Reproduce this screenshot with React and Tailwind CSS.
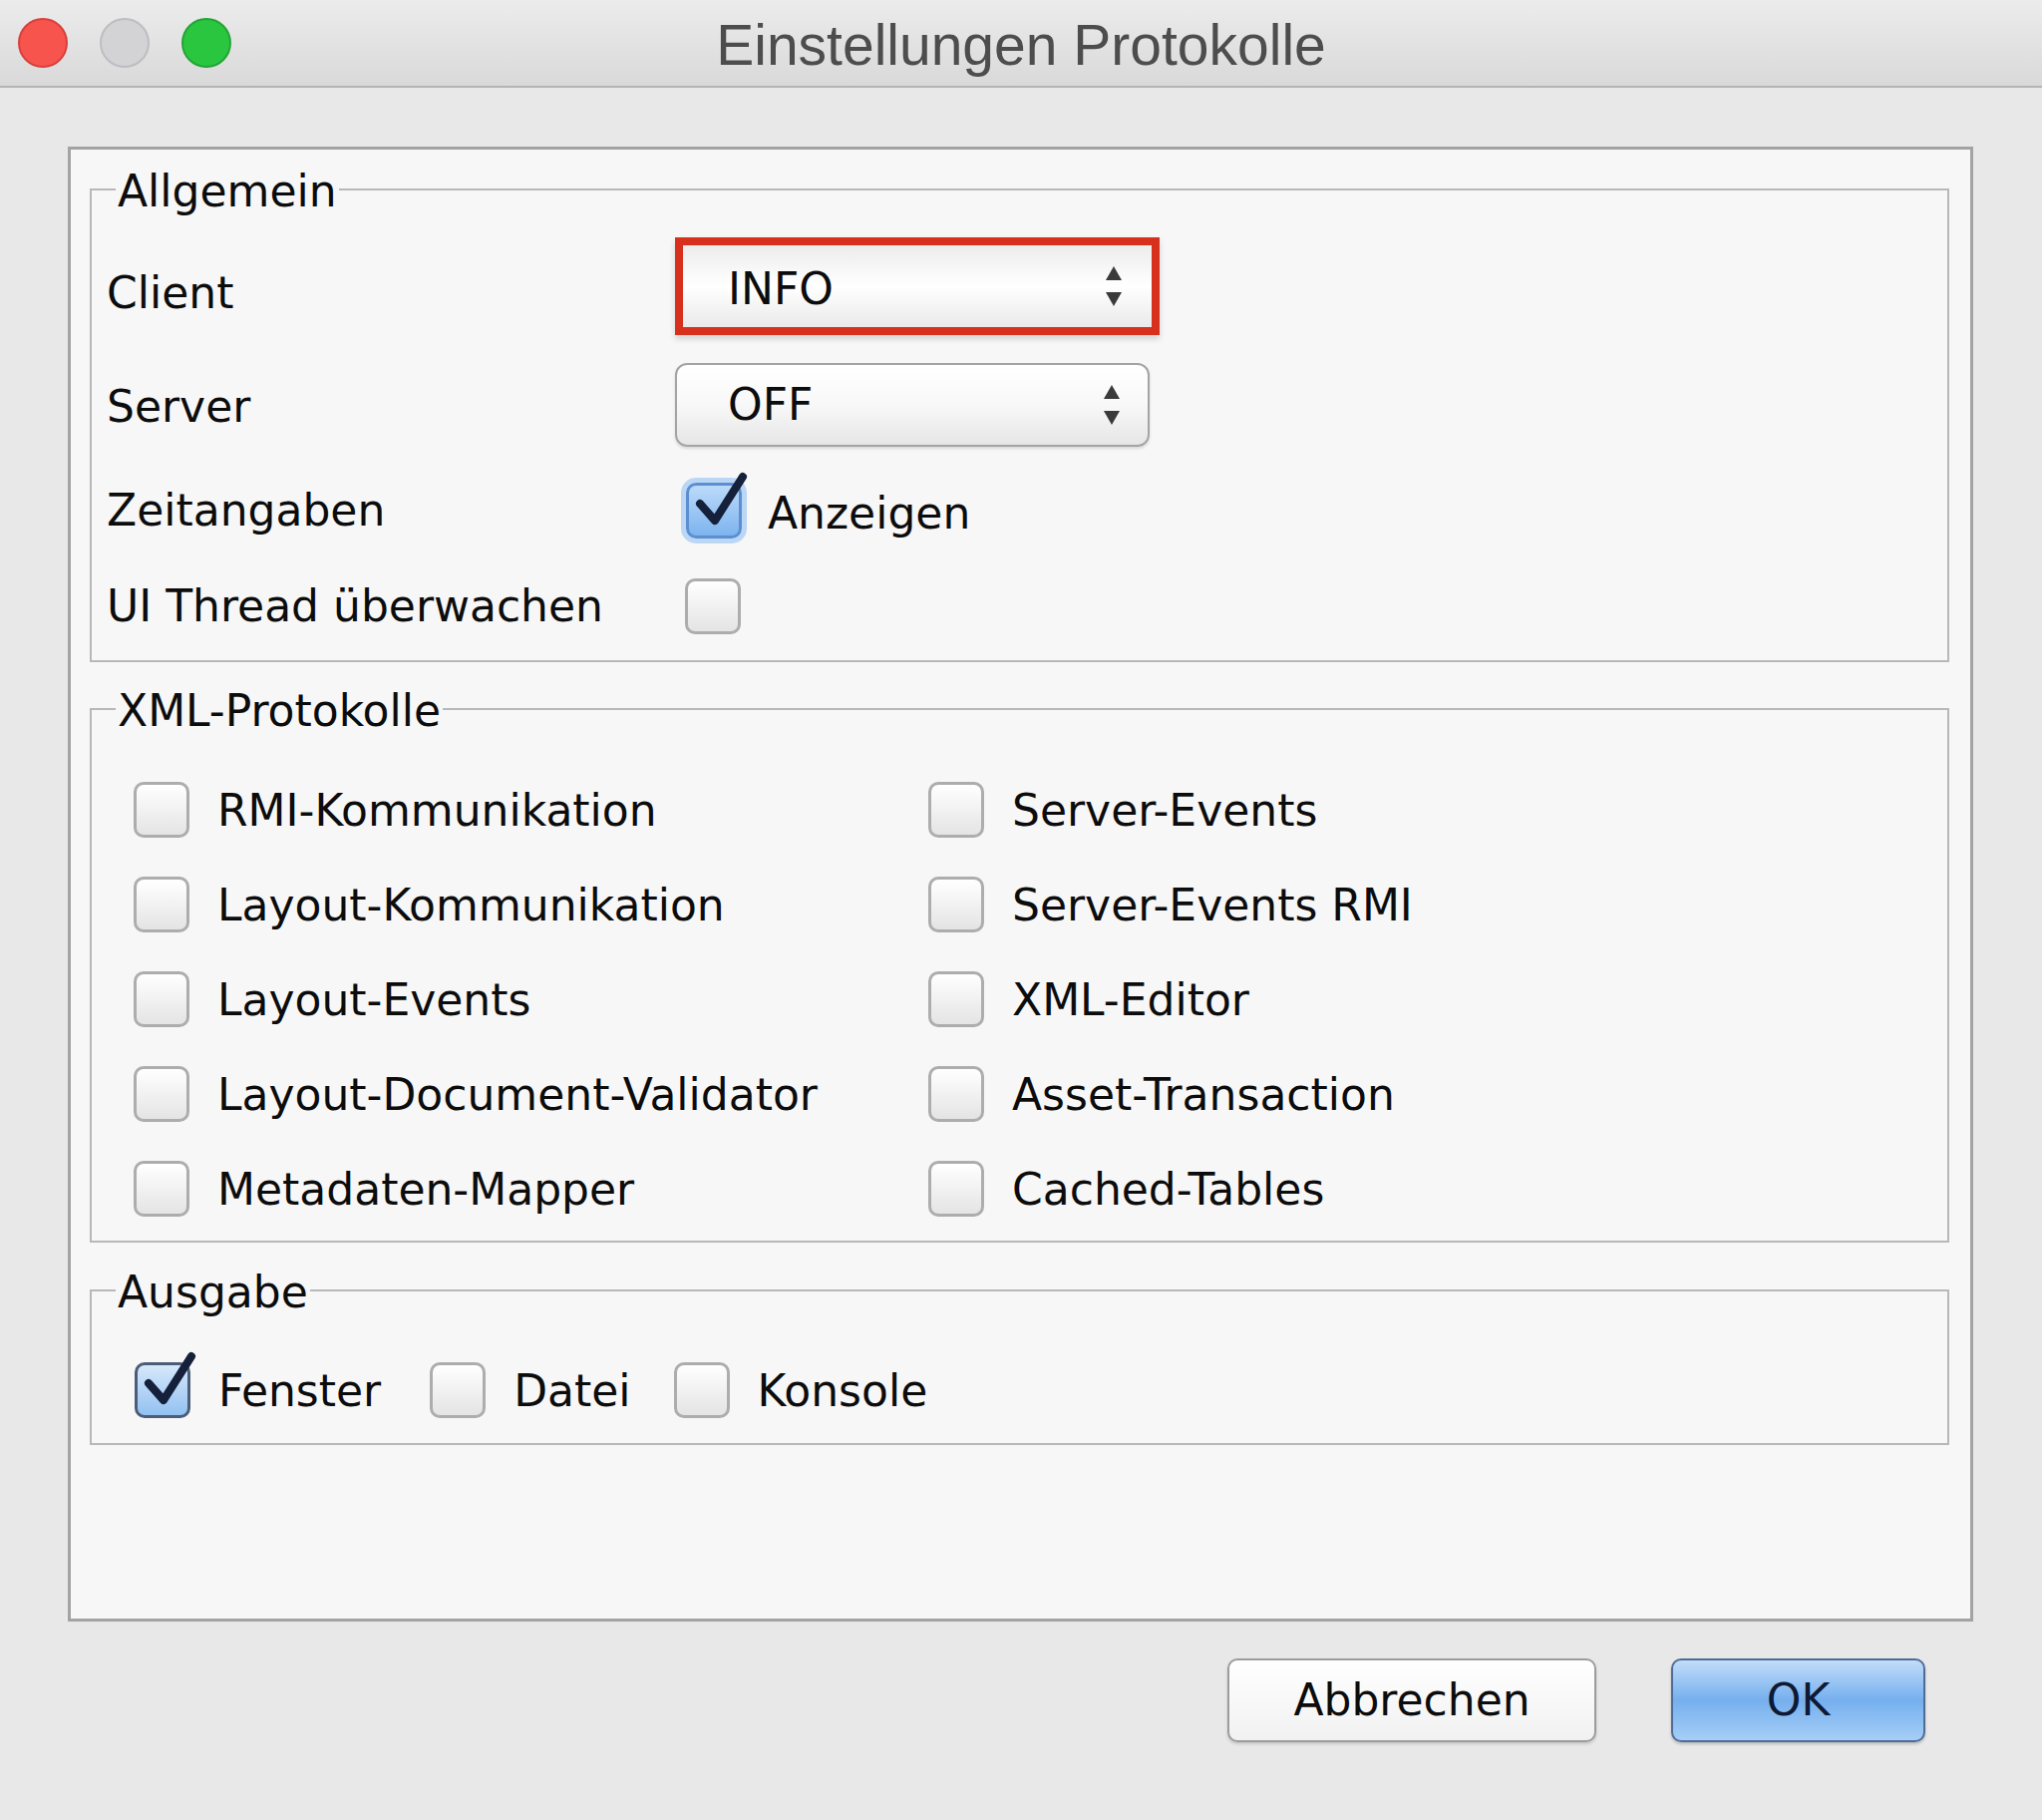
import React from 'react';

// Dialog "Einstellungen Protokolle" (Swing auf macOS)

const CheckBox = ({ checked, focus }) => {
  const box = checked
    ? focus
      ? 'border-[#5b8fd2] bg-gradient-to-b from-[#bcdaf9] to-[#7db3ee] shadow-[0_0_0_5px_rgba(140,190,245,0.55)]'
      : 'border-[#4b5d78] bg-gradient-to-b from-[#d6e8fb] to-[#93c1f1]'
    : 'border-[#adadad] bg-gradient-to-b from-white to-[#e4e4e4]';
  return (
    <span className={`relative inline-block w-[56px] h-[56px] shrink-0 rounded-[10px] border-[3px] ${box}`}>
      {checked && (
        <svg className="absolute -left-[3px] -top-[17px] w-[64px] h-[64px]" viewBox="0 0 64 64">
          <path d="M14 35 L29 52 L57 8" fill="none" stroke="#15203a" strokeWidth="8" strokeLinecap="round" strokeLinejoin="round" />
        </svg>
      )}
    </span>
  );
};

const Arrows = () => (
  <svg className="w-[18px] h-[44px]" viewBox="0 0 18 44">
    <path d="M9 2 L17 16 L1 16 Z" fill="#3a3a3a" />
    <path d="M1 28 L17 28 L9 42 Z" fill="#3a3a3a" />
  </svg>
);

const Group = ({ title, className, children }) => (
  <fieldset className={`ml-[19px] mr-[21px] border-2 border-[#b8b8b8] ${className}`}>
    <legend className="ml-[24px] px-[2px] h-[52px] leading-[52px] pt-[2px]">{title}</legend>
    {children}
  </fieldset>
);

const Item = ({ label, checked }) => (
  <div className="flex items-center h-[56px] gap-[28px]">
    <CheckBox checked={checked} />
    <span className="pt-[2px]">{label}</span>
  </div>
);

const xmlItems = [
  ['RMI-Kommunikation', 'Server-Events'],
  ['Layout-Kommunikation', 'Server-Events RMI'],
  ['Layout-Events', 'XML-Editor'],
  ['Layout-Document-Validator', 'Asset-Transaction'],
  ['Metadaten-Mapper', 'Cached-Tables'],
];

export default function App() {
  return (
    <div className="w-[2048px] h-[1825px] bg-[#e8e8e8] text-[#0c0c0c] text-[44px] leading-[52px] font-['DejaVu_Sans',sans-serif] overflow-hidden">
      {/* Titelleiste */}
      <div className="h-[88px] grid grid-cols-[1fr_auto_1fr] items-center border-b-2 border-[#b4b4b4] bg-gradient-to-b from-[#ececec] to-[#d9d9d9]">
        <div className="flex items-center gap-[32px] pl-[18px]">
          <span className="w-[50px] h-[50px] rounded-full bg-[#f8544e] border-2 border-[#d8403b]" />
          <span className="w-[50px] h-[50px] rounded-full bg-[#d3d3d6] border-2 border-[#bdbdc2]" />
          <span className="w-[50px] h-[50px] rounded-full bg-[#2bc63f] border-2 border-[#22a533]" />
        </div>
        <div className="font-['Liberation_Sans',sans-serif] text-[57px] text-[#4d4d4d] leading-[60px] pt-[4px]">Einstellungen Protokolle</div>
        <div />
      </div>

      {/* Inhalt */}
      <div className="ml-[68px] mt-[59px] w-[1911px] h-[1479px] border-[3px] border-[#a3a3a3] bg-[#f7f7f7] pt-[14px]">
        <Group title="Allgemein" className="pt-[22px] pb-[26px]">
          <div className="grid grid-cols-[570px_1fr] pl-[15px]">
            <div className="h-[98px] flex items-center pt-[14px]">Client</div>
            <div className="w-[486px] h-[98px] border-[8px] border-[#d7301d] bg-gradient-to-b from-[#ececec] via-white to-[#eaeaea] shadow-[0_4px_6px_rgba(0,0,0,0.15)] flex items-center justify-between pl-[45px] pr-[29px]">
              <span className="pt-[6px]">INFO</span>
              <Arrows />
            </div>

            <div className="h-[84px] mt-[28px] flex items-center pt-[4px]">Server</div>
            <div className="w-[476px] h-[84px] mt-[28px] rounded-[12px] border-2 border-[#a4a4a4] bg-gradient-to-b from-white via-[#f8f8f8] to-[#e6e6e6] shadow-[0_2px_3px_rgba(0,0,0,0.12)] flex items-center justify-between pl-[51px] pr-[27px]">
              <span>OFF</span>
              <Arrows />
            </div>

            <div className="h-[60px] mt-[34px] flex items-center">Zeitangaben</div>
            <div className="h-[60px] mt-[34px] flex items-center gap-[26px] pl-[11px]">
              <CheckBox checked focus />
              <span className="pt-[6px]">Anzeigen</span>
            </div>

            <div className="h-[56px] mt-[38px] flex items-center">UI Thread überwachen</div>
            <div className="h-[56px] mt-[38px] flex items-center pl-[10px]">
              <CheckBox />
            </div>
          </div>
        </Group>

        <Group title="XML-Protokolle" className="mt-[21px] pt-[47px] pb-[24px]">
          <div className="grid grid-cols-[797px_1fr] gap-y-[39px] pl-[42px]">
            {xmlItems.map(([a, b]) => (
              <React.Fragment key={a}>
                <Item label={a} />
                <Item label={b} />
              </React.Fragment>
            ))}
          </div>
        </Group>

        <Group title="Ausgabe" className="mt-[22px] pt-[46px] pb-[25px]">
          <div className="flex items-center pl-[43px]">
            <Item label="Fenster" checked />
            <div className="ml-[49px]"><Item label="Datei" /></div>
            <div className="ml-[43px]"><Item label="Konsole" /></div>
          </div>
        </Group>
      </div>

      {/* Buttons */}
      <div className="mt-[37px] flex justify-end gap-[75px] pr-[117px]">
        <button className="w-[370px] h-[84px] rounded-[10px] border-2 border-[#9c9c9c] bg-gradient-to-b from-white to-[#f1f1f1] shadow-[0_2px_3px_rgba(0,0,0,0.15)]">Abbrechen</button>
        <button className="w-[255px] h-[84px] rounded-[10px] border-2 border-[#4f6c98] bg-gradient-to-b from-[#c2ddf9] via-[#75afee] to-[#a6cef7] text-[#0e1a33] shadow-[0_2px_3px_rgba(0,0,0,0.2)]">OK</button>
      </div>
    </div>
  );
}
